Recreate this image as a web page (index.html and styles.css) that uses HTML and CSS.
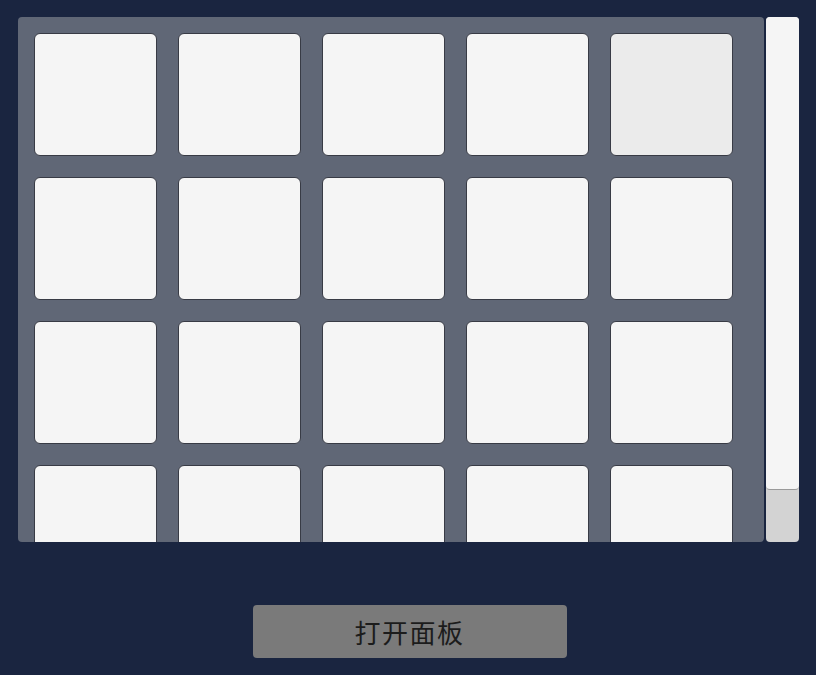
FILE: index.html
```html
<!DOCTYPE html>
<html lang="zh">
<head>
<meta charset="utf-8">
<link rel="stylesheet" href="styles.css">
</head>
<body>
<div class="page">
  <div class="scroll-view">
    <div class="viewport">
      <div class="grid">
        <div class="cell"></div><div class="cell"></div><div class="cell"></div><div class="cell"></div><div class="cell hover"></div>
        <div class="cell"></div><div class="cell"></div><div class="cell"></div><div class="cell"></div><div class="cell"></div>
        <div class="cell"></div><div class="cell"></div><div class="cell"></div><div class="cell"></div><div class="cell"></div>
        <div class="cell"></div><div class="cell"></div><div class="cell"></div><div class="cell"></div><div class="cell"></div>
      </div>
    </div>
    <div class="scrollbar">
      <div class="thumb"></div>
    </div>
  </div>
  <div class="actions">
    <button class="open-btn">打开面板</button>
  </div>
</div>
</body>
</html>
```
FILE: styles.css
```css
html, body {
  margin: 0;
  padding: 0;
  background: #1a2540;
  width: 816px;
  height: 675px;
  overflow: hidden;
  font-family: "Noto Sans CJK SC", "Noto Sans", sans-serif;
}
.page {
  padding: 17px 17px 0 18px;
}
.scroll-view {
  display: flex;
  gap: 2px;
  height: 525px;
}
.viewport {
  width: 746px;
  height: 525px;
  background: #606776;
  border-radius: 4px;
  overflow: hidden;
  box-sizing: border-box;
  padding: 16px 0 0 16px;
}
.grid {
  display: grid;
  grid-template-columns: repeat(5, 123px);
  grid-auto-rows: 123px;
  column-gap: 21px;
  row-gap: 21px;
}
.cell {
  box-sizing: border-box;
  background: #f5f5f5;
  border: 1px solid #383b45;
  border-radius: 6px;
}
.cell.hover {
  background: #ebebeb;
}
.scrollbar {
  width: 33px;
  height: 525px;
  background: #d3d3d3;
  border-radius: 4px;
  display: flex;
  flex-direction: column;
}
.thumb {
  height: 473px;
  background: #f5f5f5;
  border-radius: 4px;
  border-bottom: 1px solid #9a9a9a;
  box-sizing: border-box;
}
.actions {
  display: flex;
  justify-content: center;
  padding-top: 63px;
}
.open-btn {
  width: 314px;
  height: 53px;
  margin-left: 2px;
  background: #7a7a7a;
  border: none;
  border-radius: 4px;
  color: #1c1c1c;
  font-family: "Noto Sans CJK SC", "Noto Sans", sans-serif;
  font-size: 26px;
  letter-spacing: 1.5px;
  padding: 0;
  cursor: pointer;
}
```
